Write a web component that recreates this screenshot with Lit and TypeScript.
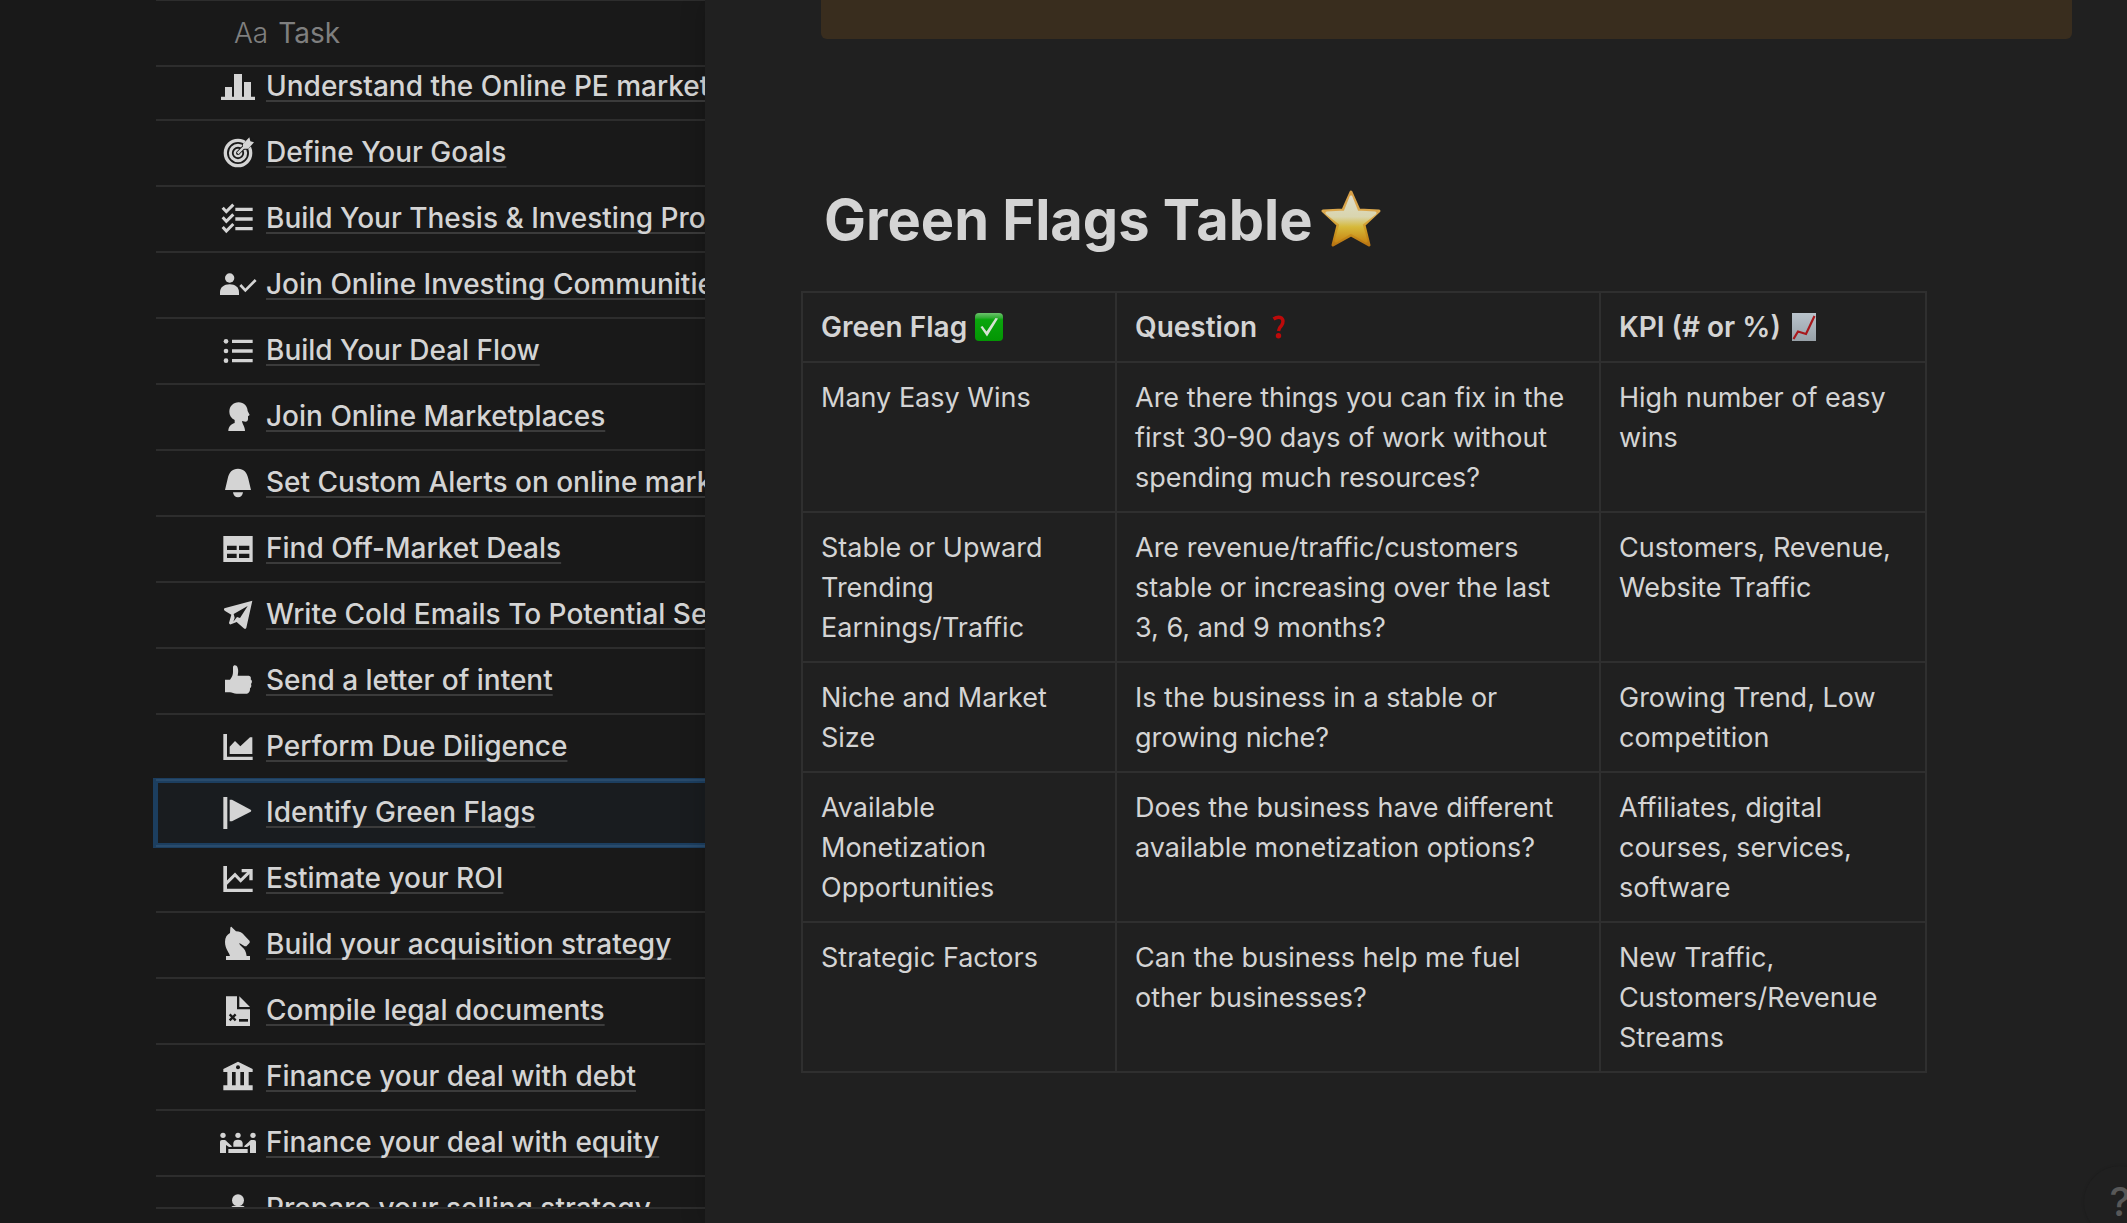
import { LitElement, html, css, svg, type TemplateResult, type SVGTemplateResult } from "lit";
import { customElement, property } from "lit/decorators.js";
import { classMap } from "lit/directives/class-map.js";

/* Glyphs are drawn on a 120 x 120 grid; "cut" marks parts in the row's background colour. */
const glyphs: Record<string, SVGTemplateResult> = {
  bars: svg`<path d="M9 89H21V60H42V89H48V21H72V89H78V45H99V89H111V99H9Z"/>`,
  target: svg`
    <circle class="line" cx="60" cy="60" r="38" stroke-width="10"/>
    <circle class="line" cx="60" cy="60" r="23" stroke-width="9"/>
    <circle cx="60" cy="60" r="13"/>
    <path class="cut-line" d="M61 59L84 36" stroke-width="12"/>
    <circle class="cut" cx="60" cy="60" r="6"/>
    <path class="cut" d="M72 40L94 8L113 28L88 50H72Z"/>
    <path class="line" d="M59 61L84 36" stroke-width="7"/>
    <path d="M75 46V33L94 13L97 25L108 28L91 47H76Z"/>`,
  checklist: svg`
    <path class="line" d="M14 26L25 38L46 17M14 55L25 67L46 46M14 84L25 96L46 75" stroke-width="9"/>
    <path d="M52 26H104V36H52ZM52 55H104V65H52ZM52 84H104V94H52Z"/>`,
  usercheck: svg`
    <circle cx="35" cy="39" r="14"/>
    <path d="M6 90V82C6 67 18 58 35 58S63 67 63 82V90Z"/>
    <path class="line" d="M67 60L82 76L113 45" stroke-width="8"/>`,
  list: svg`
    <circle cx="24" cy="31" r="7"/><circle cx="24" cy="60" r="7"/><circle cx="24" cy="89" r="7"/>
    <path d="M42 26H104V36H42ZM42 55H104V65H42ZM42 84H104V94H42Z"/>`,
  head: svg`<path d="M31 102C31 90 38 82 50 78V69C39 64 34 54 34 44C34 28 46 16 62 16C78 16 88 27 89 42L95 54L90 58V66C90 71 87 74 82 74L72 72C73 82 81 88 81 102Z"/>`,
  bell: svg`
    <path d="M21 81L29 47C33 27 43 17 60 17S87 27 91 47L99 81Z"/>
    <path d="M45 88H75C74 97 68 103 60 103S46 97 45 88Z"/>`,
  table: svg`<path fill-rule="evenodd" d="M16 21H104V99H16ZM27 50V63H56V50ZM63 50V63H94V50ZM27 74V87H56V74ZM63 74V87H94V74Z"/>`,
  plane: svg`<path fill-rule="evenodd" d="M103 17L19 40Q16 44 20 47L40 59L33 84Q34 89 39 88L56 81L79 101Q83 103 85 98ZM89 33L47 57L50 68L46 80L57 66L66 69Z"/>`,
  thumb: svg`<path d="M21 56H36C42 48 45 42 45 33V18C46 11 56 11 59 20C62 29 60 36 59 44H92C98 45 100 50 98 55C103 59 103 65 99 69C101 74 100 79 96 82C97 90 93 97 87 98H56C48 98 42 95 36 94H21Z"/>`,
  area: svg`
    <path d="M16 21H27V89H104V99H16Z"/>
    <path d="M35 59L51 42L67 58L96 31H103V81H35Z"/>`,
  flag: svg`
    <path d="M16 12H28V108H16Z"/>
    <path d="M35 20H42L98 50Q102 53 98 56L42 85H35Z"/>`,
  trend: svg`
    <path d="M16 21H27V89H104V99H16Z"/>
    <path class="line" d="M24 74L51 47L68 65L96 37" stroke-width="9"/>
    <path class="line" d="M71 35H99V64" stroke-width="10"/>`,
  knight: svg`
    <path d="M24 93H96V105H24Z"/>
    <path d="M36 94C35 82 21 74 21 50C21 37 27 29 36 24L37 8Q39 3 43 8L54 19C64 19 74 23 80 32L95 48V53L85 64H80L64 54C64 66 83 64 86 94Z"/>`,
  doc: svg`
    <path d="M24 16H57V55H96V105H24Z"/><path d="M64 16L96 48H64Z"/>
    <path class="cut-line" d="M35 70L53 88M53 70L35 88" stroke-width="7"/>
    <path class="cut" d="M63 84H90V92H63Z"/>`,
  bank: svg`
    <path d="M60 14L104 36V45H92V85H104V100H16V85H28V45H16V36ZM42 45V85H53V45ZM67 45V85H78V45Z" fill-rule="evenodd"/>
    <circle class="cut" cx="60" cy="31" r="6"/>`,
  meeting: svg`
    <circle cx="15" cy="37" r="8"/><circle cx="60" cy="37" r="8"/><circle cx="105" cy="37" r="8"/>
    <path d="M6 90V56Q6 51 12 51H20Q24 51 27 56L41 69V72H33L24 66V90ZM114 90V56Q114 51 108 51H100Q96 51 93 56L79 69V72H87L96 66V90Z"/>
    <path d="M46 71V60Q47 50 60 50T74 60V71ZM31 78H89V90H31Z"/>`,
  person: svg`<circle cx="60" cy="34" r="18"/><path d="M38 58Q40 50 50 50H70Q80 50 82 58L90 104H30Z"/>`,
};

const tasks: { icon: string; label: string; active?: boolean }[] = [
  { icon: "bars", label: "Understand the Online PE market" },
  { icon: "target", label: "Define Your Goals" },
  { icon: "checklist", label: "Build Your Thesis & Investing Process" },
  { icon: "usercheck", label: "Join Online Investing Communities" },
  { icon: "list", label: "Build Your Deal Flow" },
  { icon: "head", label: "Join Online Marketplaces" },
  { icon: "bell", label: "Set Custom Alerts on online marketplaces" },
  { icon: "table", label: "Find Off-Market Deals" },
  { icon: "plane", label: "Write Cold Emails To Potential Sellers" },
  { icon: "thumb", label: "Send a letter of intent" },
  { icon: "area", label: "Perform Due Diligence" },
  { icon: "flag", label: "Identify Green Flags", active: true },
  { icon: "trend", label: "Estimate your ROI" },
  { icon: "knight", label: "Build your acquisition strategy" },
  { icon: "doc", label: "Compile legal documents" },
  { icon: "bank", label: "Finance your deal with debt" },
  { icon: "meeting", label: "Finance your deal with equity" },
  { icon: "person", label: "Prepare your selling strategy" },
];

const flags: [string, string, string][] = [
  ["Many Easy Wins", "Are there things you can fix in the first 30-90 days of work without spending much resources?", "High number of easy wins"],
  ["Stable or Upward Trending Earnings/Traffic", "Are revenue/traffic/customers stable or increasing over the last 3, 6, and 9 months?", "Customers, Revenue, Website Traffic"],
  ["Niche and Market Size", "Is the business in a stable or growing niche?", "Growing Trend, Low competition"],
  ["Available Monetization Opportunities", "Does the business have different available monetization options?", "Affiliates, digital courses, services, software"],
  ["Strategic Factors", "Can the business help me fuel other businesses?", "New Traffic, Customers/Revenue Streams"],
];

const star = html`<svg class="star" viewBox="0 0 60 58" role="img" aria-label="star">
  <defs>
    <linearGradient id="gold" x1="0" y1="0" x2="0" y2="1">
      <stop offset="0" stop-color="#d8a048"/><stop offset=".45" stop-color="#dba94e"/>
      <stop offset=".7" stop-color="#cf9c22"/><stop offset="1" stop-color="#b87412"/>
    </linearGradient>
    <linearGradient id="shine" x1="0" y1="0" x2="0" y2="1">
      <stop offset="0" stop-color="#dedcc8"/><stop offset=".45" stop-color="#d9d5ae"/>
      <stop offset=".68" stop-color="#d6b93a"/><stop offset="1" stop-color="#c98a16"/>
    </linearGradient>
  </defs>
  <path fill="url(#gold)" stroke="url(#gold)" stroke-width="3" stroke-linejoin="round" d="M30 2L38 20L58 21L43 35L48 55L30 45L12 55L17 35L2 21L22 20Z"/>
  <path fill="url(#shine)" stroke="url(#shine)" stroke-width="3" stroke-linejoin="round" d="M30 7L36 22L54 23L40 34L45 51L30 42L15 51L20 34L6 23L24 22Z"/>
</svg>`;

const tick = html`<svg class="emoji" viewBox="0 0 28 28" role="img" aria-label="check mark">
  <defs><linearGradient id="green" x1="0" y1="0" x2="0" y2="1">
    <stop offset="0" stop-color="#6cc26c"/><stop offset=".16" stop-color="#35ae38"/>
    <stop offset=".24" stop-color="#0aa50d"/><stop offset="1" stop-color="#039603"/>
  </linearGradient></defs>
  <rect width="28" height="28" rx="4" fill="url(#green)"/>
  <path d="M5.500 14L7.500 13L11.500 18.500L20.500 5L23 5.500L12 23.500Z" fill="#d6e2d3"/>
</svg>`;

const query = html`<svg class="emoji" viewBox="0 0 28 28" role="img" aria-label="question mark">
  <path d="M8.500 6Q13 3 16.500 5Q19.500 8 16.500 12.500Q14 15 13.500 18" fill="none" stroke="#bd0a0a" stroke-width="3.400"/>
  <circle cx="13.500" cy="22.800" r="2.700" fill="#bd0a0a"/>
</svg>`;

const chart = html`<svg class="emoji" viewBox="0 0 28 28" role="img" aria-label="chart increasing">
  <defs><linearGradient id="paper" x1="0" y1="0" x2="0" y2="1">
    <stop offset="0" stop-color="#b9c3cb"/><stop offset="1" stop-color="#98a1a8"/>
  </linearGradient></defs>
  <rect x="3" width="24" height="28" fill="url(#paper)"/>
  <path d="M4.500 26L9 18.500L17 21L25.500 3" fill="none" stroke="#a8181c" stroke-width="2.200"/>
</svg>`;

@customElement("task-row")
class TaskRow extends LitElement {
  @property() icon = "";
  @property() label = "";
  @property({ type: Boolean }) active = false;

  static styles = css`
    :host { display: block; }
    .row {
      position: relative;
      display: flex;
      align-items: center;
      gap: 8px;
      height: 64px;
      padding-left: 62px;
      border-bottom: 2px solid #2d2d2d;
      color: #d4d4d4;
      text-decoration: none;
      white-space: nowrap;
      --ground: #191919;
    }
    .active::before {
      content: "";
      position: absolute;
      inset: -3px -8px -3px -3px;
      border: 5px solid rgba(35, 131, 226, 0.35);
      background: rgba(35, 131, 226, 0.03);
      background-clip: padding-box;
    }
    .active { --ground: #191c1f; }
    .icon { position: relative; flex: none; width: 40px; height: 40px; fill: currentColor; }
    .icon .line { fill: none; stroke: currentColor; }
    .icon .cut { fill: var(--ground); }
    .icon .cut-line { fill: none; stroke: var(--ground); }
    .label {
      position: relative;
      padding-bottom: 2px;
      font-size: 28px;
      font-weight: 500;
      text-decoration: underline 2px #3b3b3b;
      text-underline-offset: 4px;
      text-decoration-skip-ink: none;
    }
  `;

  render(): TemplateResult {
    return html`<a href="#" class=${classMap({ row: true, active: this.active })}>
      <svg class="icon" viewBox="0 0 120 120" aria-hidden="true">${glyphs[this.icon]}</svg>
      <span class="label">${this.label}</span>
    </a>`;
  }
}

@customElement("app-root")
class AppRoot extends LitElement {
  static styles = css`
    :host {
      display: grid;
      grid-template-columns: minmax(0, 705fr) minmax(0, 1422fr);
      height: 100vh;
      overflow: hidden;
      background: #191919;
      color: #d4d4d4;
      font-family: Inter, "Liberation Sans", sans-serif;
      font-size: 27px;
      line-height: 40px;
    }
    .board {
      display: flex;
      flex-direction: column;
      min-height: 0;
      padding: 0 0 14px 156px;
      overflow: hidden;
    }
    .head {
      display: flex;
      align-items: center;
      gap: 10px;
      height: 64px;
      padding-left: 78px;
      margin: 0;
      border-top: 1px solid #2d2d2d;
      border-bottom: 2px solid #2d2d2d;
      color: #7f7f7f;
      font-size: 28px;
      font-weight: 400;
    }
    .kind { font-weight: 300; }
    .scroller {
      flex: 1;
      min-height: 0;
      margin-left: -3px;
      padding-left: 3px;
      overflow: hidden;
    }
    .tasks { margin: -12px 0 0; padding: 0; list-style: none; }
    .end { height: 2px; background: #2d2d2d; }
    .peek {
      position: relative;
      min-width: 0;
      padding: 0 55px 0 96px;
      background: #202020;
      box-shadow: 0 0 24px rgba(0, 0, 0, 0.2);
      overflow: hidden;
    }
    .callout {
      height: 39px;
      margin-left: 20px;
      border-radius: 0 0 6px 6px;
      background: #392d1e;
    }
    .title {
      display: flex;
      align-items: center;
      gap: 8px;
      margin: 142px 0 32px 23px;
      font-size: 56px;
      font-weight: 700;
      line-height: 78px;
    }
    .star { width: 60px; height: 58px; margin-bottom: 2px; }
    .flags { width: 1126px; border-collapse: collapse; table-layout: fixed; }
    .narrow { width: 314px; }
    .wide { width: 484px; }
    .cell {
      padding: 15px 18px 13px;
      border: 2px solid #2f2f2f;
      font-weight: 400;
      text-align: left;
      vertical-align: top;
    }
    th.cell { padding: 14px 18px; }
    .caption { display: flex; align-items: center; gap: 8px; font-size: 28px; font-weight: 600; white-space: nowrap; }
    .emoji { flex: none; width: 28px; height: 28px; }
    .help {
      position: absolute;
      right: -29px;
      bottom: -15px;
      width: 72px;
      height: 72px;
      padding: 0;
      border: 0;
      border-radius: 50%;
      background: #202020;
      box-shadow: 0 0 3px rgba(0, 0, 0, 0.18);
      color: #585858;
      font: 500 40px/72px Inter, sans-serif;
    }
  `;

  render(): TemplateResult {
    return html`
      <nav class="board" aria-label="Tasks">
        <h2 class="head"><span class="kind">Aa</span><span>Task</span></h2>
        <div class="scroller">
          <ul class="tasks">
            ${tasks.map((t) => html`<li><task-row .icon=${t.icon} .label=${t.label} .active=${!!t.active}></task-row></li>`)}
          </ul>
        </div>
        <div class="end"></div>
      </nav>
      <main class="peek">
        <div class="callout"></div>
        <h1 class="title"><span>Green Flags Table</span>${star}</h1>
        <table class="flags">
          <colgroup><col class="narrow" /><col class="wide" /><col /></colgroup>
          <thead>
            <tr>
              <th class="cell" scope="col"><span class="caption">Green Flag ${tick}</span></th>
              <th class="cell" scope="col"><span class="caption">Question ${query}</span></th>
              <th class="cell" scope="col"><span class="caption">KPI (# or %) ${chart}</span></th>
            </tr>
          </thead>
          <tbody>
            ${flags.map((row) => html`<tr>${row.map((text) => html`<td class="cell">${text}</td>`)}</tr>`)}
          </tbody>
        </table>
        <button class="help" type="button" aria-label="Help">?</button>
      </main>
    `;
  }
}
